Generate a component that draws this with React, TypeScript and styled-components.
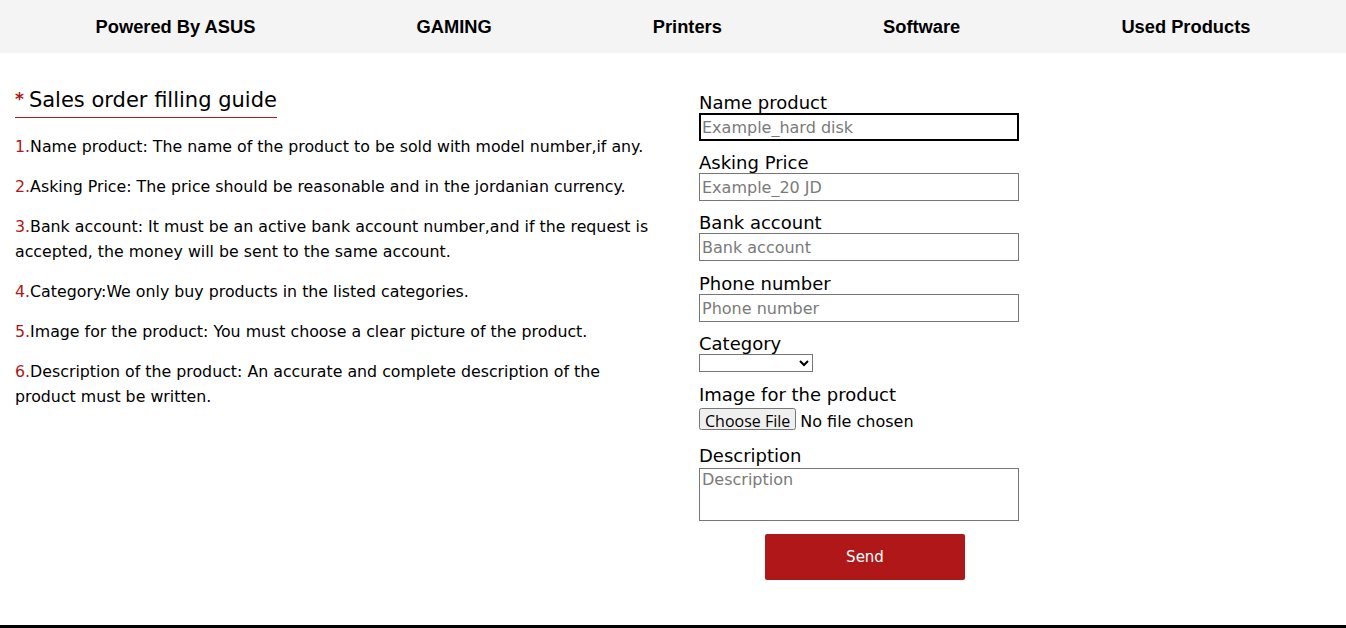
import React from "react";
import styled, { createGlobalStyle } from "styled-components";

const GlobalStyle = createGlobalStyle`
  html, body { margin: 0; padding: 0; background: #fff; }
  body { font-family: "DejaVu Sans", "Open Sans", sans-serif; color: #000; }
  * { box-sizing: border-box; }
`;

const RED = "#b01718";

const Nav = styled.nav`
  height: 53px;
  background: #f4f4f4;
  display: flex;
  align-items: center;
  justify-content: space-around;
  padding: 1px 15px 0 15px;
`;

const NavLink = styled.a`
  font-family: "Liberation Sans", Arial, sans-serif;
  font-weight: 700;
  font-size: 18.3px;
  color: #000;
  text-decoration: none;
`;

const Main = styled.main`
  display: grid;
  grid-template-columns: 643px 320px;
  column-gap: 41px;
  align-items: start;
  padding: 30px 15px 0 15px;
  min-height: 572px;
`;

const Guide = styled.section``;

const Heading = styled.h2`
  display: inline-block;
  margin: 0 0 16px 0;
  font-size: 21px;
  font-weight: 400;
  line-height: 30px;
  padding: 2px 0 2px 0;
  border-bottom: 1px solid #a3201e;
`;

const Star = styled.span`
  color: ${RED};
  font-weight: 700;
  font-size: 17px;
  line-height: 0;
  margin-right: 5px;
  vertical-align: 2px;
`;

const Item = styled.p`
  margin: 0 0 15px 0;
  font-size: 15.8px;
  line-height: 25px;
`;

const Num = styled.span`
  color: ${RED};
`;

const Form = styled.form`
  margin-top: 10px;
  display: flex;
  flex-direction: column;
`;

const Field = styled.div<{ $gap?: number }>`
  display: flex;
  flex-direction: column;
  align-items: flex-start;
  margin-bottom: ${(p) => p.$gap ?? 12}px;
`;

const Label = styled.label`
  font-size: 18px;
  line-height: 20px;
`;

const TextInput = styled.input<{ $focused?: boolean }>`
  width: 320px;
  height: 28px;
  border: ${(p) => (p.$focused ? "2px solid #000" : "1px solid #767676")};
  padding: 0 ${(p) => (p.$focused ? 1 : 2)}px;
  font-family: inherit;
  font-size: 16px;
  outline: none;
  &::placeholder { color: #7a7a7a; }
`;

const Select = styled.select`
  width: 114px;
  height: 18px;
  border: 1px solid #767676;
  border-radius: 0;
  font-size: 13px;
  background: #fff;
`;

const FileInput = styled.input`
  display: block;
  height: 22px;
  margin-top: 3px;
  font-family: inherit;
  font-size: 16px;
  line-height: 22px;
  &::file-selector-button {
    font-family: "Open Sans", sans-serif;
    font-size: 16px;
    height: 22px;
    padding: 0 4px;
    margin-right: 4px;
  }
`;

const TextArea = styled.textarea`
  margin-top: 2px;
  width: 320px;
  height: 53px;
  border: 1px solid #767676;
  padding: 1px 2px;
  font-family: inherit;
  font-size: 16px;
  resize: none;
  &::placeholder { color: #7a7a7a; }
`;

const SendButton = styled.button`
  margin: 1px 0 0 66px;
  width: 200px;
  height: 46px;
  border: none;
  border-radius: 2px;
  background: ${RED};
  color: #fff;
  font-family: inherit;
  font-size: 15px;
`;

const Footer = styled.footer`
  border-top: 3px solid #000;
`;

const navItems = ["Powered By ASUS", "GAMING", "Printers", "Software", "Used Products"];

const guide = [
  "Name product: The name of the product to be sold with model number,if any.",
  "Asking Price: The price should be reasonable and in the jordanian currency.",
  "Bank account: It must be an active bank account number,and if the request is accepted, the money will be sent to the same account.",
  "Category:We only buy products in the listed categories.",
  "Image for the product: You must choose a clear picture of the product.",
  "Description of the product: An accurate and complete description of the product must be written.",
];

export default function App() {
  return (
    <>
      <GlobalStyle />
      <Nav>
        {navItems.map((n) => (
          <NavLink key={n} href="#">{n}</NavLink>
        ))}
      </Nav>
      <Main>
        <Guide>
          <Heading>
            <Star>*</Star>Sales order filling guide
          </Heading>
          {guide.map((g, i) => (
            <Item key={i}>
              <Num>{i + 1}.</Num>
              {g}
            </Item>
          ))}
        </Guide>
        <Form onSubmit={(e) => e.preventDefault()}>
          <Field>
            <Label>Name product</Label>
            <TextInput $focused placeholder="Example_hard disk" />
          </Field>
          <Field>
            <Label>Asking Price</Label>
            <TextInput placeholder="Example_20 JD" />
          </Field>
          <Field $gap={13}>
            <Label>Bank account</Label>
            <TextInput placeholder="Bank account" />
          </Field>
          <Field>
            <Label>Phone number</Label>
            <TextInput placeholder="Phone number" />
          </Field>
          <Field $gap={13}>
            <Label>Category</Label>
            <Select defaultValue="">
              <option value=""></option>
            </Select>
          </Field>
          <Field $gap={16}>
            <Label>Image for the product</Label>
            <FileInput type="file" />
          </Field>
          <Field>
            <Label>Description</Label>
            <TextArea placeholder="Description" />
          </Field>
          <SendButton type="submit">Send</SendButton>
        </Form>
      </Main>
      <Footer />
    </>
  );
}
